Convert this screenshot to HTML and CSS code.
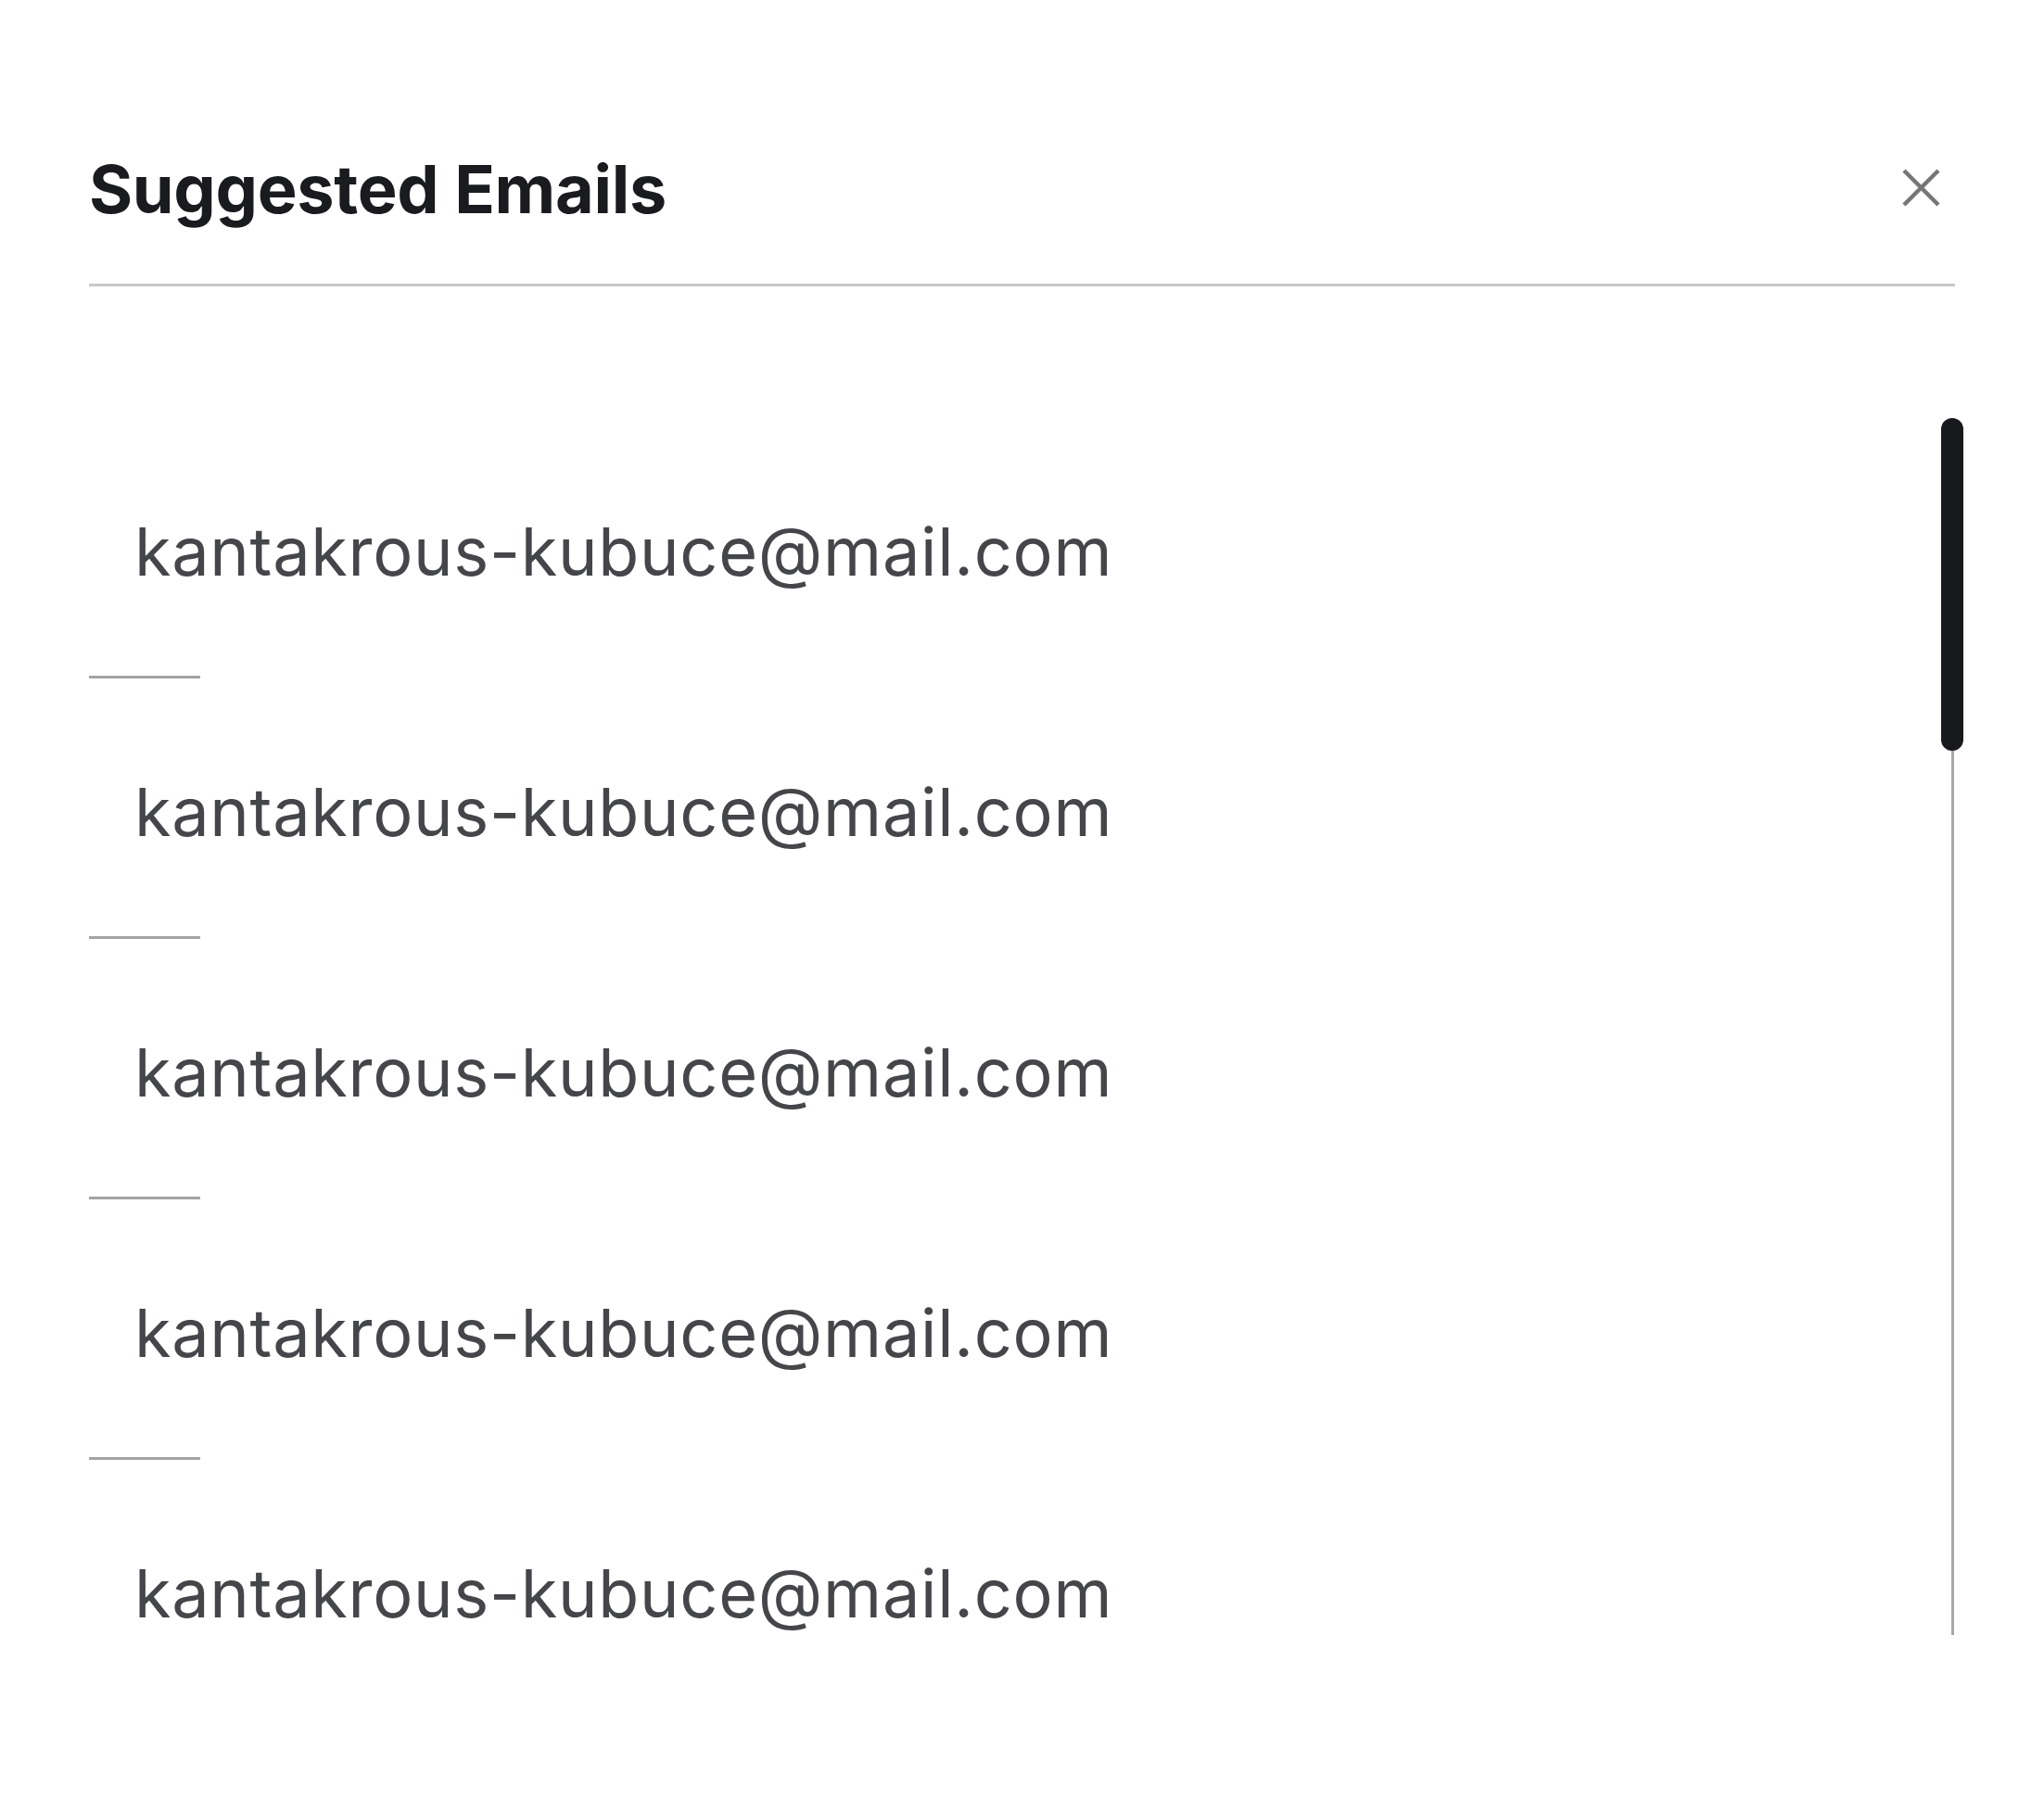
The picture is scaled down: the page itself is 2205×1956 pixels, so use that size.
FILE: index.html
```html
<!DOCTYPE html>
<html lang="en">
<head>
<meta charset="utf-8">
<title>Suggested Emails</title>
<link rel="stylesheet" href="styles.css">
</head>
<body>
<div class="dialog">
  <header class="header">
    <h1 class="title">Suggested Emails</h1>
    <button class="close" aria-label="Close">
      <svg width="41" height="41" viewBox="0 0 41 41"><path d="M2 2 L39 39 M39 2 L2 39" stroke="#767676" stroke-width="4.5" fill="none"/></svg>
    </button>
  </header>
  <div class="body">
    <ul class="list">
      <li class="row"><span class="email">kantakrous-kubuce@mail.com</span></li>
      <li class="row"><span class="email">kantakrous-kubuce@mail.com</span></li>
      <li class="row"><span class="email">kantakrous-kubuce@mail.com</span></li>
      <li class="row"><span class="email">kantakrous-kubuce@mail.com</span></li>
      <li class="row"><span class="email">kantakrous-kubuce@mail.com</span></li>
    </ul>
    <div class="scrollbar"><div class="thumb"></div><div class="track"></div></div>
  </div>
</div>
</body>
</html>
```
FILE: styles.css
```css
html, body { margin: 0; padding: 0; background: #fff; }
body { font-family: Inter, "Liberation Sans", sans-serif; }
.dialog { padding: 0 96px; }
.header {
  display: flex; align-items: center; justify-content: space-between;
  padding-top: 144px; padding-bottom: 42px;
  border-bottom: 3px solid #c8c8c8;
}
.title {
  margin: 0; font-size: 72px; line-height: 120px; font-weight: 700;
  color: #1a1b1f; letter-spacing: -0.3px;
}
.close {
  border: 0; background: none; padding: 0; margin: 0 16px 4px 0;
  width: 41px; height: 41px; display: block;
}
.close svg { display: block; }
.body {
  display: flex; margin-top: 142px; height: 1313px; overflow: hidden;
  margin-right: -9px;
}
.list { list-style: none; margin: 0; padding: 0; flex: 1; }
.row { padding: 94px 0 84px 49px; position: relative; }
.row::after {
  content: ""; position: absolute; left: 0; bottom: -3px;
  width: 120px; height: 3px; background: #a3a3a3;
}
.row + .row { margin-top: 3px; }
.row:last-child::after { display: none; }
.email {
  display: block; font-size: 72px; line-height: 100px; color: #45464a;
  font-weight: 400; letter-spacing: 0.7px;
}
.scrollbar { width: 24px; display: flex; flex-direction: column; align-items: center; }
.thumb { width: 24px; height: 359px; border-radius: 12px; background: #18191d; flex: none; }
.track { width: 3px; flex: 1; background: #a8a8a8; }
```
